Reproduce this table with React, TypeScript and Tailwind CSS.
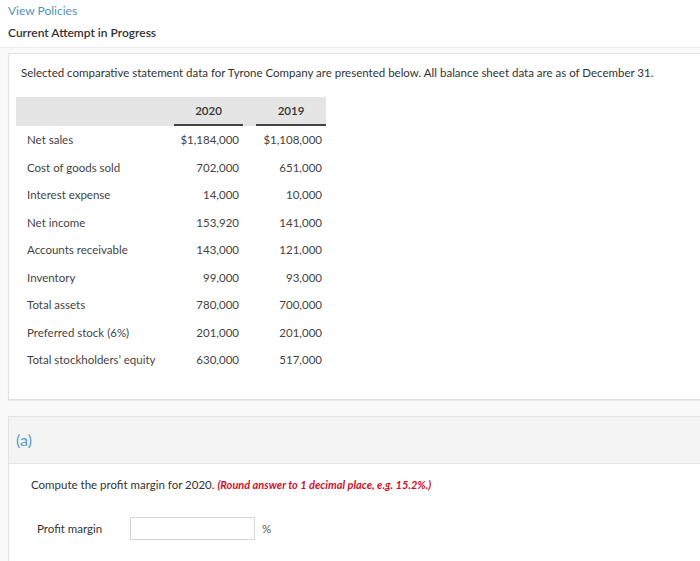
const rows: [string, string, string][] = [
  ['Net sales', '$1,184,000', '$1,108,000'],
  ['Cost of goods sold', '702,000', '651,000'],
  ['Interest expense', '14,000', '10,000'],
  ['Net income', '153,920', '141,000'],
  ['Accounts receivable', '143,000', '121,000'],
  ['Inventory', '99,000', '93,000'],
  ['Total assets', '780,000', '700,000'],
  ['Preferred stock (6%)', '201,000', '201,000'],
  ['Total stockholders’ equity', '630,000', '517,000'],
];

export default function App() {
  return (
    <div className="w-[700px] h-[561px] overflow-hidden bg-[#f9f9f9] text-[11.5px] text-[#333] font-['Lato','Liberation_Sans',sans-serif]">
      <div className="bg-white border-b border-[#ececec] h-[48px] pl-[8px] pt-[3px] text-[12px]">
        <div className="text-[#4f93bd] leading-[16px]">View Policies</div>
        <div className="mt-[6px] font-semibold text-[#333] leading-[16px]">Current Attempt in Progress</div>
      </div>

      <div className="mt-[5px] ml-[8px] w-[720px] bg-white border border-[#e2e2e2] shadow-[0_1px_1px_rgba(0,0,0,0.06)] h-[347px] pl-[7px]">
        <p className="pt-[11px] pl-[5px] leading-[16px]">
          Selected comparative statement data for Tyrone Company are presented below. All balance sheet data are as of December 31.
        </p>

        <div className="mt-[16px] w-[310px]">
          <div className="flex bg-[#e5e5e5] h-[29px] font-semibold">
            <div className="w-[150px]" />
            <div className="pl-[8px] w-[77px] flex">
              <div className="flex-1 flex items-center justify-center border-b-2 border-[#444]">2020</div>
            </div>
            <div className="pl-[13px] w-[83px] flex">
              <div className="flex-1 flex items-center justify-center border-b-2 border-[#444]">2019</div>
            </div>
          </div>
          {rows.map(([label, a, b]) => (
            <div key={label} className="flex h-[27.5px] items-center text-[#444]">
              <div className="w-[150px] pl-[11px]">{label}</div>
              <div className="w-[77px] text-right pr-[4px]">{a}</div>
              <div className="w-[83px] text-right pr-[4px]">{b}</div>
            </div>
          ))}
        </div>
      </div>

      <div className="mt-[16px] ml-[8px] w-[720px] bg-white border border-[#e2e2e2] h-[160px]">
        <div className="bg-[#f4f4f4] border-b border-[#e6e6e6] h-[47px] flex items-center pl-[7px]">
          <span className="text-[#5a9bc8] text-[16px]">(a)</span>
        </div>
        <div className="pl-[22px] pt-[13px] text-[#333]">
          <p className="leading-[16px]">
            Compute the profit margin for 2020.{' '}
            <span className="text-[#d0102a] font-bold italic text-[11px]">(Round answer to 1 decimal place, e.g. 15.2%.)</span>
          </p>
          <div className="mt-[24px] flex items-center">
            <span className="w-[99px] pl-[6px]">Profit margin</span>
            <div className="w-[125px] h-[23px] border border-[#d6d6d6] bg-white" />
            <span className="ml-[7px] text-[#555]">%</span>
          </div>
        </div>
      </div>
    </div>
  );
}
